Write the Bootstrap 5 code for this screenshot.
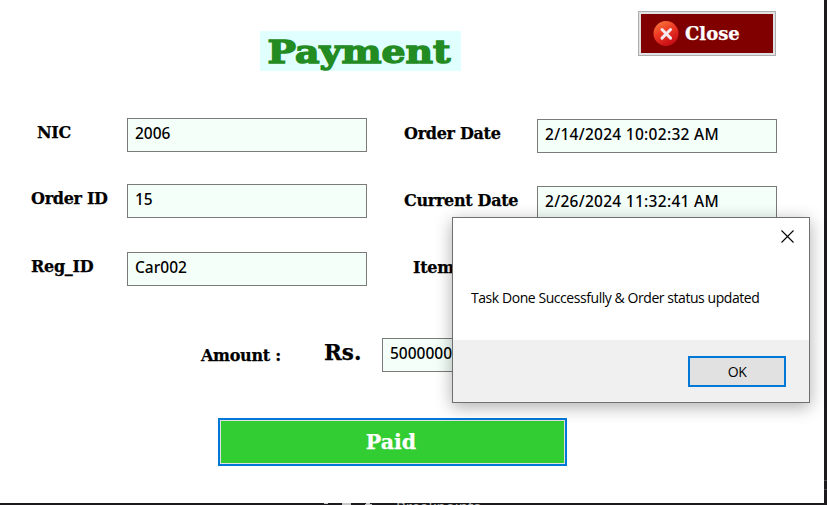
<!DOCTYPE html>
<html lang="en">
<head>
<meta charset="utf-8">
<meta name="viewport" content="width=device-width, initial-scale=1">
<title>Payment</title>
<link href="https://cdn.jsdelivr.net/npm/bootstrap@5.3.0/dist/css/bootstrap.min.css" rel="stylesheet">
<style>
body { width: 827px; height: 505px; background: #1c1a1c; }
.pay-window { width: 824px; height: 503px; background: #fff; }
.slab { font-family: "DejaVu Serif", serif; font-weight: 700; color: #000; white-space: nowrap; -webkit-text-stroke: .25px; }
.pay-header { height: 118px; padding-left: 260px; }
.pay-title { width: 201px; height: 40px; margin-top: 31px; background: #e0ffff; padding-right: 4px; }
.pay-title h1 { font: 700 31px/42px "DejaVu Serif", serif; color: #228b22; -webkit-text-stroke: 1.4px #228b22; transform: scaleX(1.22); }
.close-btn { width: 138px; height: 45px; margin: 11px 0 0 177px; background: #800000; border: 1px solid #adadad; box-shadow: inset 0 0 0 2px #e1e1e1; padding: 0 0 0 14px; gap: 6px; border-radius: 0; }
.close-btn .slab, .paid-btn .slab { color: #fff; }
.close-btn .slab { font-size: 18px; line-height: 1; }
.left-fields { width: 367px; padding-left: 31px; gap: 32px; }
.right-fields { width: 410px; padding-left: 37px; padding-top: 1px; gap: 33px; }
.field-row { height: 34px; }
.left-fields .field-row:last-child { margin-top: 2px; }
.field-row .slab { font-size: 16px; letter-spacing: -.3px; line-height: 30px; }
.value-box { width: 240px; height: 34px; background: #f5fffa; border: 1px solid #7a7a7a; border-radius: 0; padding: 0 7px; font: 500 15.5px/29px "Noto Sans", "Open Sans", sans-serif; color: #000; white-space: nowrap; }
.right-fields .value-box { letter-spacing: .28px; }
.nudge-nic { padding-left: 6px; }
.nudge-item { padding-left: 9px; }
.amount-row { height: 34px; margin-top: 51px; padding-left: 201px; }
.amount-label { width: 123px; font-size: 16px; letter-spacing: -.3px; line-height: 35px; }
.rs-label { width: 58px; font-size: 21.5px; line-height: 30px; }
.paid-btn { width: 349px; height: 48px; margin: 46px 0 0 218px; background: #32cd32; border: 2px solid #0078d7; box-shadow: inset 0 0 0 1px #e1e1e1; border-radius: 0; }
.paid-btn .slab { font-size: 20.5px; line-height: 1; padding: 1px 3px 0 0; }
.message-box { left: 452px; top: 217px; width: 358px; height: 186px; border: 1px solid #707070; background: #fff; box-shadow: 0 4px 16px rgba(0,0,0,.32); font-family: "Open Sans", "Noto Sans", sans-serif; color: #000; }
.message-top { height: 122px; }
.message-text { font-size: 14px; letter-spacing: -.44px; padding: 0 0 0 18px; line-height: 20px; margin-top: 42px; white-space: nowrap; }
.message-close { padding: 12px 15px 0 0; height: 28px; }
.message-foot { height: 62px; background: #f0f0f0; padding: 16px 23px 0 0; }
.ok-btn { width: 98px; height: 31px; background: #e1e1e1; border: 2px solid #0078d7; border-radius: 0; font-size: 14px; letter-spacing: -.6px; line-height: 28px; padding: 0; color: #000; }
.editor-strip { left: 318px; top: 503px; width: 170px; height: 2px; color: #bbb; }
.editor-strip span { font: 15px/15px "Noto Sans", sans-serif; margin-left: 22px; margin-top: -4px; }
.edge-lines { left: 824px; top: 480px; width: 3px; height: 10px; border-top: 1px solid #484848; border-bottom: 1px solid #484848; }
</style>
<script src="https://cdn.jsdelivr.net/npm/bootstrap@5.3.0/dist/js/bootstrap.bundle.min.js"></script>
</head>
<body class="m-0 overflow-hidden position-relative">
<main class="pay-window overflow-hidden">
  <header class="pay-header d-flex align-items-start">
    <div class="pay-title d-flex justify-content-center"><h1 class="m-0">Payment</h1></div>
    <button type="button" class="btn close-btn d-flex align-items-center">
      <svg width="26" height="26" viewBox="0 0 26 26" aria-hidden="true">
        <defs><linearGradient id="ball" x1="0" y1="0" x2=".5" y2="1"><stop offset="0" stop-color="#f8853f"/><stop offset=".5" stop-color="#ee3b25"/><stop offset="1" stop-color="#c90f16"/></linearGradient></defs>
        <circle cx="13" cy="12.5" r="12.5" fill="url(#ball)"/>
        <path d="M9 8.5l8.6 8.6M17.6 8.5l-8.6 8.6" stroke="#f3e9ee" stroke-width="3" stroke-linecap="round"/>
      </svg>
      <span class="slab">Close</span>
    </button>
  </header>
  <section class="d-flex align-items-start">
    <div class="left-fields d-flex flex-column">
      <div class="field-row d-flex justify-content-between"><span class="slab nudge-nic">NIC</span><div class="value-box">2006</div></div>
      <div class="field-row d-flex justify-content-between"><span class="slab">Order ID</span><div class="value-box">15</div></div>
      <div class="field-row d-flex justify-content-between"><span class="slab">Reg_ID</span><div class="value-box">Car002</div></div>
    </div>
    <div class="right-fields d-flex flex-column">
      <div class="field-row d-flex justify-content-between"><span class="slab">Order Date</span><div class="value-box">2/14/2024 10:02:32 AM</div></div>
      <div class="field-row d-flex justify-content-between"><span class="slab">Current Date</span><div class="value-box">2/26/2024 11:32:41 AM</div></div>
      <div class="field-row d-flex"><span class="slab nudge-item">Item</span></div>
    </div>
  </section>
  <div class="amount-row d-flex">
    <span class="slab amount-label">Amount :</span>
    <span class="slab rs-label">Rs.</span>
    <div class="value-box">5000000</div>
  </div>
  <button type="button" class="btn paid-btn d-flex align-items-center justify-content-center p-0"><span class="slab">Paid</span></button>
</main>
<div class="message-box position-absolute" role="dialog">
  <div class="message-top">
    <div class="message-close d-flex justify-content-end">
      <svg width="13" height="13" viewBox="0 0 13 13" aria-label="Close"><path d="M.5.5l12 12M12.5.5l-12 12" stroke="#000" stroke-width="1.1"/></svg>
    </div>
    <p class="message-text mb-0">Task Done Successfully &amp; Order status updated</p>
  </div>
  <div class="message-foot d-flex justify-content-end"><button type="button" class="btn ok-btn">OK</button></div>
</div>
<div class="editor-strip position-absolute overflow-hidden d-flex">
  <svg width="56" height="2"><path d="M6 0h4v1H6zM24 0h9v2h-9zM48 0h4v1h2v1h-7V1h1z" fill="#c8c8c8"/></svg><span>Breakpoints</span>
</div>
<div class="edge-lines position-absolute"></div>
</body>
</html>
